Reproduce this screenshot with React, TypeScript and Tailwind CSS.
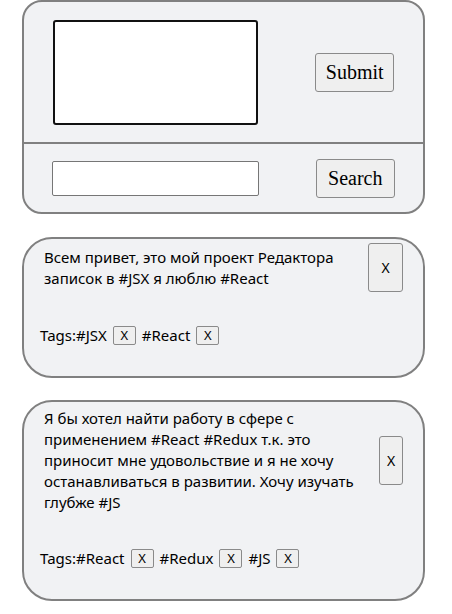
import { useState } from "react";

type Note = {
  id: number;
  text: string;
  tags: string[];
  deleteBtn: string;
};

const initialNotes: Note[] = [
  {
    id: 1,
    text: "Всем привет, это мой проект Редактора записок в #JSX я люблю #React",
    tags: ["#JSX", "#React"],
    deleteBtn: "w-[35px]",
  },
  {
    id: 2,
    text: "Я бы хотел найти работу в сфере с применением #React #Redux т.к. это приносит мне удовольствие и я не хочу останавливаться в развитии. Хочу изучать глубже #JS",
    tags: ["#React", "#Redux", "#JS"],
    deleteBtn: "w-[24px]",
  },
];

const sans = "font-['Noto_Sans','Open_Sans',sans-serif]";
const serif = "font-['Liberation_Serif','DejaVu_Serif',serif]";

export default function App() {
  const [notes, setNotes] = useState(initialNotes);
  const [text, setText] = useState("");
  const [query, setQuery] = useState("");

  function removeNote(id: number) {
    setNotes(notes.filter((n) => n.id !== id));
  }

  function removeTag(id: number, tag: string) {
    setNotes(
      notes.map((n) =>
        n.id === id ? { ...n, tags: n.tags.filter((t) => t !== tag) } : n
      )
    );
  }

  return (
    <div className={`min-h-screen bg-white text-black ${sans}`}>
      <div className="w-[403px] ml-[22px] flex flex-col gap-[23px]">

        {/* editor + search */}
        <div className="bg-[#f1f2f4] border-2 border-[#808080] rounded-[20px] overflow-hidden">
          <div className="h-[140px] flex items-center justify-around">
            <textarea
              autoFocus
              value={text}
              onChange={(e) => setText(e.target.value)}
              className="w-[205px] h-[105px] bg-white border-2 border-[#111] rounded-[3px] outline-none resize-none p-1 text-sm"
            />
            <button
              className={`w-[79px] h-[39px] bg-[#efefef] border border-[#8a8a8a] rounded-[3px] text-[20px] ${serif}`}
            >
              Submit
            </button>
          </div>

          <div className="h-[70px] border-t-2 border-[#808080] flex items-center justify-around">
            <input
              value={query}
              onChange={(e) => setQuery(e.target.value)}
              className="w-[207px] h-[35px] bg-white border border-[#767676] rounded-[2px] outline-none px-1 text-sm"
            />
            <button
              className={`w-[79px] h-[39px] bg-[#efefef] border border-[#8a8a8a] rounded-[3px] text-[20px] ${serif}`}
            >
              Search
            </button>
          </div>
        </div>

        {/* notes */}
        <div className="flex flex-col gap-[22px]">
          {notes.map((note) => (
            <div
              key={note.id}
              className="bg-[#f1f2f4] border-2 border-[#808080] rounded-[30px] pb-[30px]"
            >
              <div className="flex items-center pt-1 pl-[20px] pr-5">
                <p className="flex-1 py-[2px] text-[15px] leading-[21px] pr-6">
                  {note.text}
                </p>
                <button
                  onClick={() => removeNote(note.id)}
                  className={`${note.deleteBtn} h-[49px] shrink-0 bg-[#efefef] border border-[#8a8a8a] rounded-[3px] text-[14px]`}
                >
                  X
                </button>
              </div>

              <div className="mt-[33px] pl-[16px] flex items-center gap-[6px] text-[15px] leading-[21px]">
                <span>Tags:{note.tags[0]}</span>
                {note.tags.map((tag, i) => (
                  <span key={tag} className="flex items-center gap-[6px]">
                    {i > 0 && <span>{tag}</span>}
                    <button
                      onClick={() => removeTag(note.id, tag)}
                      className="w-[23px] h-[19px] bg-[#efefef] border border-[#8a8a8a] rounded-[2px] text-[13px] leading-none"
                    >
                      X
                    </button>
                  </span>
                ))}
              </div>
            </div>
          ))}
        </div>

      </div>
    </div>
  );
}
